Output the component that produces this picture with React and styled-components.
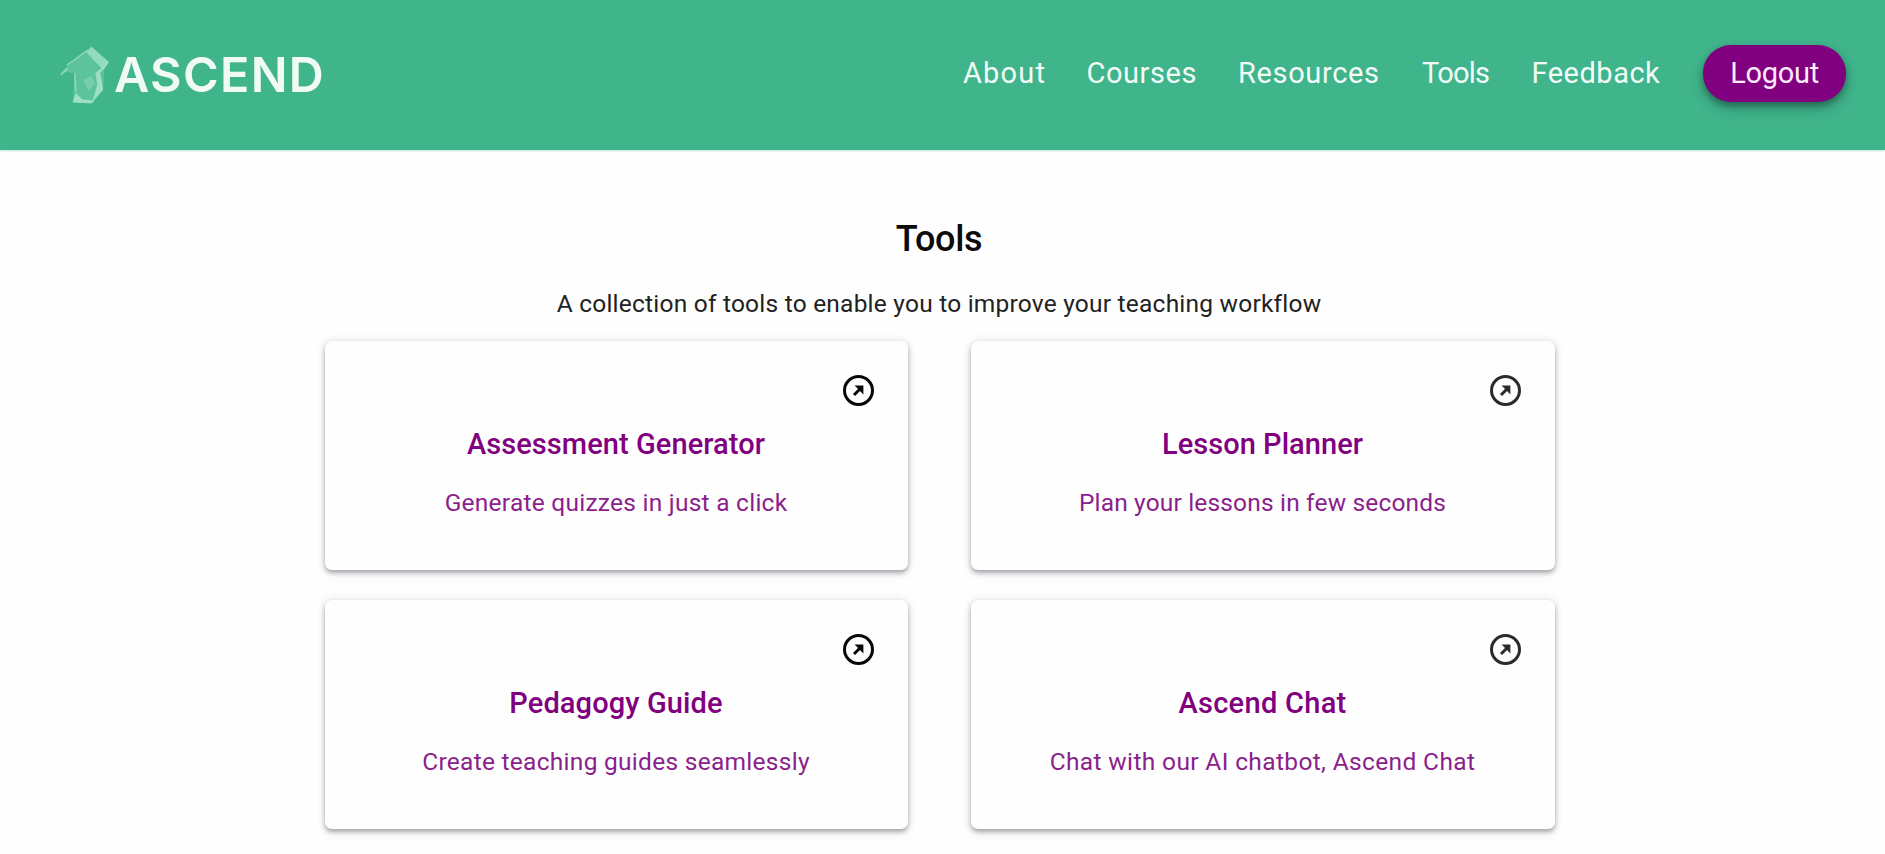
import React from 'react';
import styled, { createGlobalStyle } from 'styled-components';

const GlobalStyle = createGlobalStyle`
  * { box-sizing: border-box; }
  body {
    margin: 0;
    background: #fefefe;
    color: #0b0b0b;
    font-family: Roboto, "Liberation Sans", sans-serif;
  }
`;

const Header = styled.header`
  display: flex;
  align-items: center;
  justify-content: space-between;
  height: 150px;
  padding: 0 39px 4px 58px;
  background: #40b48b;
  box-shadow: 0 1px 2px rgba(64, 180, 139, 0.35);
`;

const Brand = styled.a`
  display: flex;
  align-items: center;
  color: #f1fbf6;
  text-decoration: none;
`;

const BrandMark = styled.svg`
  width: 56px;
  height: 66px;
  margin-top: 4px;
`;

const BrandName = styled.span`
  margin-top: 4px;
  font: 600 48.5px/60px Inter, "Open Sans", sans-serif;
  letter-spacing: 1.3px;
`;

const Nav = styled.nav`
  display: flex;
  align-items: center;
  gap: 42px;
`;

const NavLink = styled.a`
  width: ${(p) => p.$width}px;
  color: #f2fcf7;
  font-size: 29px;
  line-height: 36px;
  letter-spacing: ${(p) => p.$tracking}px;
  white-space: nowrap;
  text-decoration: none;
`;

const LogoutButton = styled.button`
  width: 143px;
  height: 57px;
  padding: 0;
  border: 0;
  border-radius: 28px;
  background: #800080;
  box-shadow: 0 4px 7px rgba(20, 50, 40, 0.5), 0 8px 14px rgba(20, 50, 40, 0.16);
  color: #fbeafb;
  font: 400 29px/36px Roboto, sans-serif;
  letter-spacing: -0.3px;
`;

const Main = styled.main`
  display: flex;
  flex-direction: column;
  align-items: center;
  width: 1230px;
  margin-left: 325px;
  padding: 67px 0 24px;
`;

const Title = styled.h1`
  margin: 0 2px 0 0;
  font-size: 36px;
  font-weight: 500;
  line-height: 44px;
  letter-spacing: -0.3px;
`;

const Subtitle = styled.p`
  margin: 28px 2px 22px 0;
  color: #222;
  font-size: 24.5px;
  line-height: 30px;
  letter-spacing: 0.22px;
`;

const Grid = styled.section`
  display: grid;
  grid-template-columns: 583px 584px;
  grid-auto-rows: 229px;
  gap: 30px 63px;
`;

const Card = styled.article`
  display: flex;
  flex-direction: column;
  align-items: center;
  padding: 33px 33px 0 32px;
  border-radius: 7px;
  background: #fefefe;
  box-shadow: 0 3px 4px rgba(50, 45, 55, 0.34), 0 0 8px rgba(60, 50, 80, 0.13),
    0 6px 12px rgba(60, 50, 80, 0.05);
  color: #800080;
`;

const OpenIcon = styled.svg`
  align-self: flex-end;
  width: 33px;
  height: 33px;
  color: ${(p) => (p.$soft ? '#2b2b2b' : '#080808')};
`;

const CardTitle = styled.h2`
  margin: 19px 0 0;
  font-size: 29px;
  font-weight: 500;
  line-height: 36px;
  letter-spacing: ${(p) => p.$tracking}px;
`;

const CardText = styled.p`
  margin: 26px 0 0;
  color: #8b1f8b;
  font-size: 24.5px;
  line-height: 30px;
  letter-spacing: ${(p) => p.$tracking}px;
`;

const links = [
  { label: 'About', width: 81.5, tracking: 1.2 },
  { label: 'Courses', width: 109.5, tracking: 0.57 },
  { label: 'Resources', width: 142, tracking: 0.65 },
  { label: 'Tools', width: 67.5, tracking: -0.75 },
  { label: 'Feedback', width: 129.5, tracking: 0.5 },
];

const tools = [
  { title: 'Assessment Generator', text: 'Generate quizzes in just a click', titleTracking: 0.08, textTracking: 0.25 },
  { title: 'Lesson Planner', text: 'Plan your lessons in few seconds', titleTracking: 0.05, textTracking: 0.17, soft: true },
  { title: 'Pedagogy Guide', text: 'Create teaching guides seamlessly', titleTracking: 0.12, textTracking: 0.28 },
  { title: 'Ascend Chat', text: 'Chat with our AI chatbot, Ascend Chat', titleTracking: 0.3, textTracking: 0.36, soft: true },
];

function AscendMark() {
  return (
    <BrandMark viewBox="0 0 57 66" aria-hidden="true">
      <path d="M1 33 L9 24 L18 17 L34 4 L52 20 L47 28 L46 48 L36 61 L15 61 L17 31 L9 30 Z" fill="#8fdcbb" opacity=".38" />
      <path d="M34 4 L52 20 L45 27 L29 10 Z" fill="#b6ebd3" opacity=".6" />
      <path d="M52 20 L43 31 L46 48 L35 60 L40 43 L38 31 Z" fill="#c8f2df" opacity=".6" />
      <path d="M15 61 L18 51 L25 58 L37 59 L34 62 Z" fill="#c3efdb" opacity=".65" />
      <path d="M26 38 L34 34 L38 42 L31 49 Z" fill="#a5e5c9" opacity=".35" />
      <path d="M9 23 L30 8 M17 31 L18 50 M3 33 L10 26" stroke="#b6ebd3" strokeWidth="1.5" opacity=".6" fill="none" />
    </BrandMark>
  );
}

function ToolCard({ tool }) {
  return (
    <Card>
      <OpenIcon viewBox="0 0 33 33" $soft={tool.soft} aria-hidden="true">
        <circle cx="16.5" cy="16.5" r="14" fill="none" stroke="currentColor" strokeWidth="3" />
        <path d="M12 21 L18.5 14.5" stroke="currentColor" strokeWidth="3" fill="none" />
        <path d="M12.6 11.6 H21.4 V20.4 Z" fill="currentColor" />
      </OpenIcon>
      <CardTitle $tracking={tool.titleTracking}>{tool.title}</CardTitle>
      <CardText $tracking={tool.textTracking}>{tool.text}</CardText>
    </Card>
  );
}

export default function App() {
  return (
    <>
      <GlobalStyle />
      <Header>
        <Brand>
          <AscendMark />
          <BrandName>ASCEND</BrandName>
        </Brand>
        <Nav>
          {links.map((l) => (
            <NavLink key={l.label} $width={l.width} $tracking={l.tracking}>{l.label}</NavLink>
          ))}
          <LogoutButton>Logout</LogoutButton>
        </Nav>
      </Header>
      <Main>
        <Title>Tools</Title>
        <Subtitle>A collection of tools to enable you to improve your teaching workflow</Subtitle>
        <Grid>
          {tools.map((t) => <ToolCard key={t.title} tool={t} />)}
        </Grid>
      </Main>
    </>
  );
}
